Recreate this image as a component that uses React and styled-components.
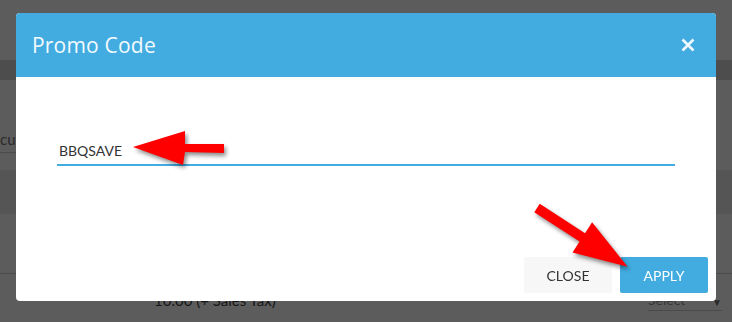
import React from 'react';
import styled, { createGlobalStyle } from 'styled-components';

const Global = createGlobalStyle`
  html, body { margin: 0; padding: 0; background: #fff; }
  body { font-family: Lato, "Liberation Sans", sans-serif; overflow: hidden; }
  * { box-sizing: border-box; }
`;

const Page = styled.div`
  width: 732px;
  height: 322px;
  display: flex;
  flex-direction: column;
  background: #fff;
  overflow: hidden;
`;

const Band = styled.div`
  flex-shrink: 0;
  height: ${(p) => p.$h}px;
  background: ${(p) => p.$bg || '#fff'};
  border-bottom: ${(p) => (p.$line ? '1px solid #cfcfcf' : 'none')};
  display: flex;
  align-items: ${(p) => p.$align || 'flex-start'};
  justify-content: space-between;
  padding: ${(p) => p.$pad || '0'};
  overflow: hidden;
`;

const FieldLabel = styled.div`
  margin-left: -17px;
  margin-top: 50px;
  width: 300px;
  font-size: 15px;
  color: #777;
  padding-bottom: 4px;
  border-bottom: 1px solid #cfcfcf;
`;

const PriceText = styled.span`
  margin-left: 154px;
  font-size: 15px;
  color: #444;
`;

const SelectBox = styled.div`
  width: 74px;
  margin-right: 10px;
  display: flex;
  justify-content: space-between;
  align-items: flex-end;
  font-size: 14px;
  color: #999;
  padding-bottom: 2px;
  border-bottom: 1px solid #cfcfcf;
`;

const Overlay = styled.div`
  position: fixed;
  inset: 0;
  background: rgba(0, 0, 0, 0.64);
  display: flex;
  justify-content: center;
  align-items: flex-start;
  padding-top: 13px;
`;

const Modal = styled.div`
  width: 700px;
  height: 288px;
  background: #fff;
  border-radius: 4px;
  overflow: hidden;
  display: flex;
  flex-direction: column;
`;

const Header = styled.div`
  height: 64px;
  background: #42ace1;
  display: flex;
  align-items: center;
  justify-content: space-between;
  padding: 0 21px 0 16px;
`;

const Title = styled.h2`
  margin: 0;
  font-family: "Open Sans", "Noto Sans", sans-serif;
  font-weight: 400;
  font-size: 21px;
  color: #f3fafd;
  letter-spacing: 0.2px;
`;

const CloseIcon = styled.button`
  border: 0;
  background: transparent;
  padding: 0;
  width: 14px;
  height: 14px;
  display: flex;
  cursor: pointer;
`;

const Body = styled.div`
  height: 172px;
  padding: 59px 41px 0 41px;
`;

const Input = styled.input`
  width: 100%;
  height: 30px;
  border: 0;
  border-bottom: 2px solid #42ace1;
  outline: none;
  padding: 0 0 0 2px;
  font-family: Lato, "Liberation Sans", sans-serif;
  font-size: 14px;
  color: #333;
  background: transparent;
`;

const Footer = styled.div`
  display: flex;
  justify-content: flex-end;
  gap: 8px;
  padding: 8px;
`;

const Button = styled.button`
  width: 88px;
  height: 36px;
  border: 0;
  border-radius: 2px;
  font-family: Lato, "Liberation Sans", sans-serif;
  font-size: 14px;
  text-transform: uppercase;
  cursor: pointer;
  background: ${(p) => (p.$primary ? '#42ace1' : '#f7f7f7')};
  color: ${(p) => (p.$primary ? '#fff' : '#333')};
`;

const Annotations = styled.svg`
  position: fixed;
  left: 0;
  top: 0;
  width: 732px;
  height: 322px;
  pointer-events: none;
  filter: drop-shadow(2px 3px 2px rgba(0, 0, 0, 0.45));
`;

export default function App() {
  return (
    <>
      <Global />
      <Page>
        <Band $h={60} />
        <Band $h={20} $bg="#d6d6d6" />
        <Band $h={90}>
          <FieldLabel>Accumulated</FieldLabel>
        </Band>
        <Band $h={44} $bg="#ececec" />
        <Band $h={60} $line />
        <Band $h={48} $align="flex-start" $pad="17px 0 0 0">
          <PriceText>10.00 (+ Sales Tax)</PriceText>
          <SelectBox>
            <span>Select</span>
            <span style={{ fontSize: 10, color: '#777' }}>▼</span>
          </SelectBox>
        </Band>
      </Page>
      <Overlay>
        <Modal>
          <Header>
            <Title>Promo Code</Title>
            <CloseIcon aria-label="close">
              <svg width="14" height="14" viewBox="0 0 14 14">
                <path d="M1.5 1.5 L12.5 12.5 M12.5 1.5 L1.5 12.5" stroke="#eef8fd" strokeWidth="2.6" />
              </svg>
            </CloseIcon>
          </Header>
          <Body>
            <Input defaultValue="BBQSAVE" />
          </Body>
          <Footer>
            <Button>Close</Button>
            <Button $primary>Apply</Button>
          </Footer>
        </Modal>
      </Overlay>
      <Annotations viewBox="0 0 732 322">
        <polygon
          points="133,147 185,131 185,144 224,144 224,153 185,152 183,165"
          fill="#ff0000"
        />
        <g transform="translate(537 208) rotate(33)">
          <polygon points="0,-5 54,-5 54,-18 108,0 54,18 54,5 0,5" fill="#ff0000" />
        </g>
      </Annotations>
    </>
  );
}
